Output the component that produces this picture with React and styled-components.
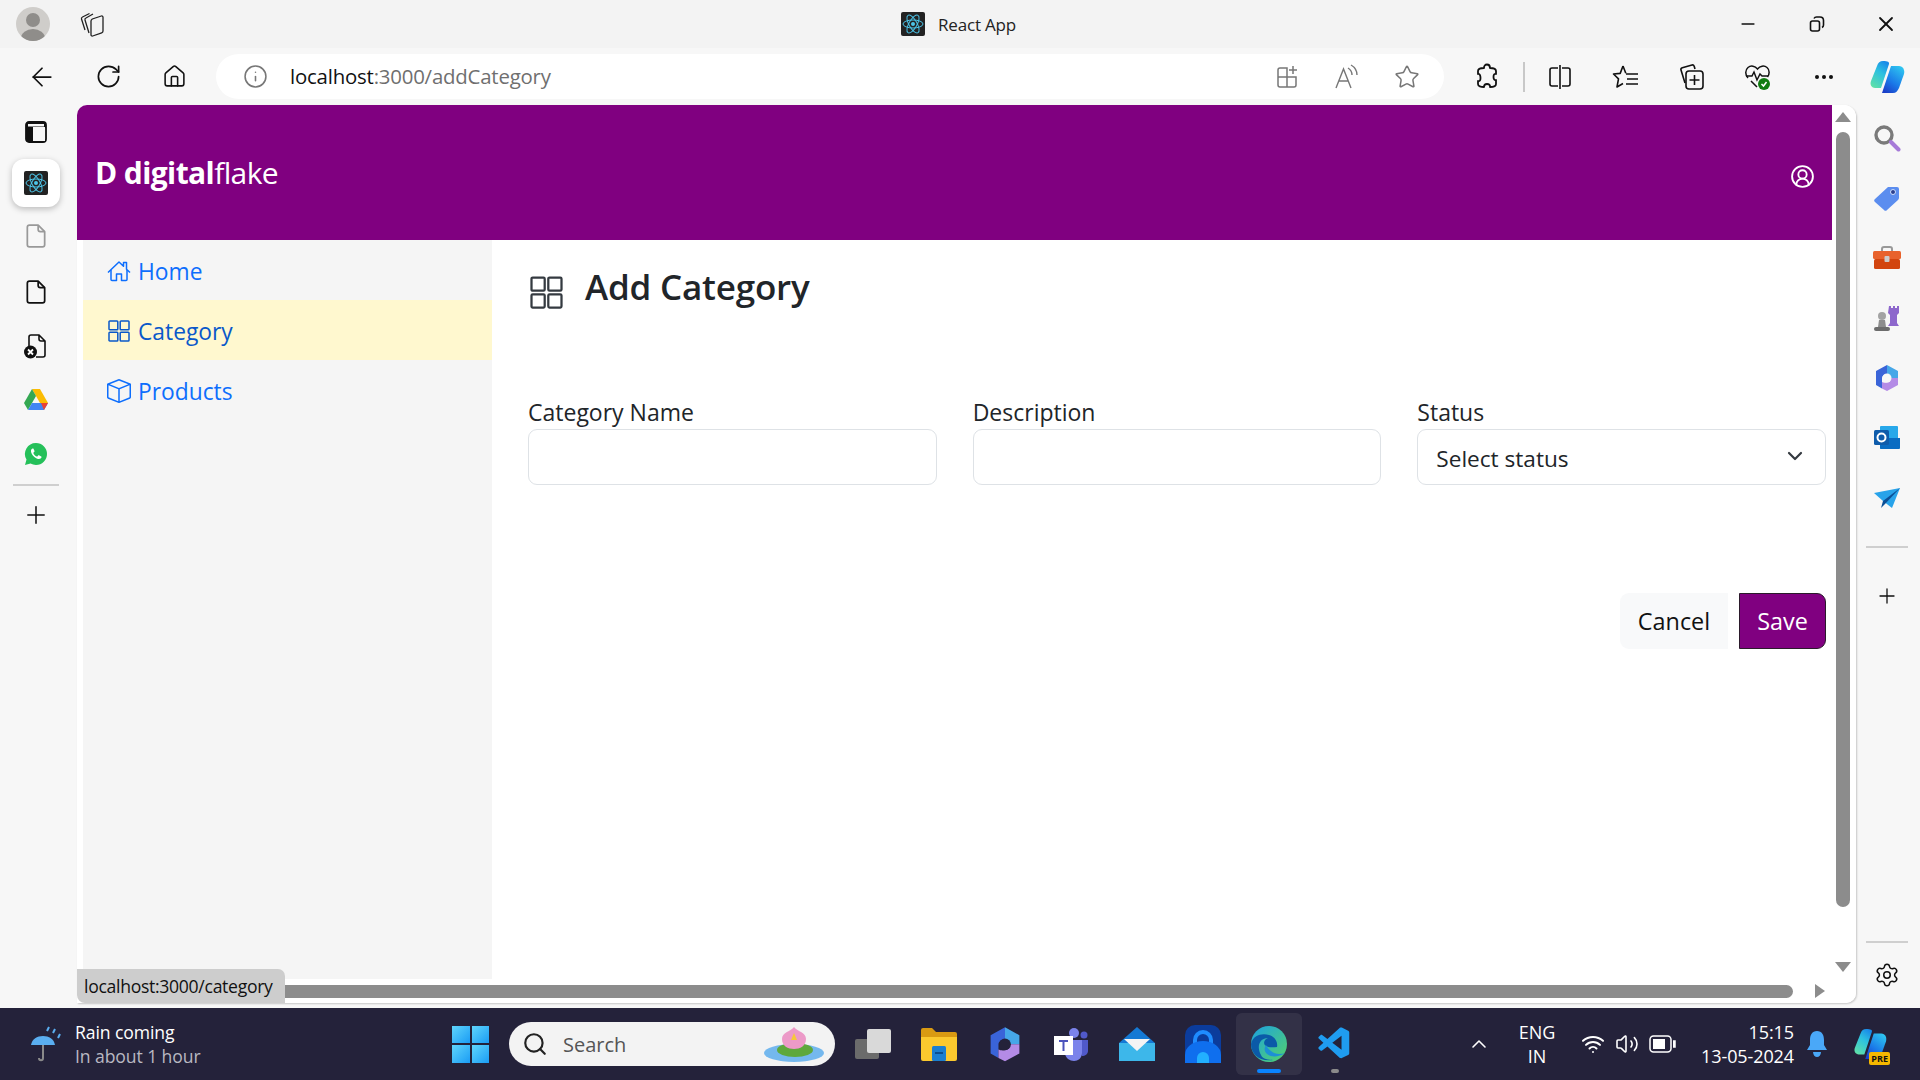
import React from 'react'
import styled, { createGlobalStyle } from 'styled-components'
import {
  ArrowLeft, RotateCw, Home as HomeLine, Info, Star, Plus, Settings, ChevronDown,
  CircleUserRound, Minus, X, Search, ChevronUp, Wifi, Volume2
} from 'lucide-react'
import { BsBox } from 'react-icons/bs'
import { VscVscode } from 'react-icons/vsc'

const PURPLE = '#800080'
const FONT = '"Open Sans", "Noto Sans", "Liberation Sans", sans-serif'

const GlobalStyle = createGlobalStyle`
  html, body { margin: 0; padding: 0; background: #f7f7f7; }
  * { box-sizing: border-box; }
  body { font-family: ${FONT}; color: #212529; overflow: hidden; }
`

const Screen = styled.div`
  width: 1920px;
  height: 1080px;
  display: flex;
  flex-direction: column;
  overflow: hidden;
`

// window chrome
const TitleBar = styled.div`
  height: 48px;
  background: #f3f3f3;
  display: flex;
  align-items: center;
  padding-left: 16px;
  flex: none;
`
const Avatar = styled.div`
  width: 34px;
  height: 34px;
  border-radius: 50%;
  background: #cfcdca;
  overflow: hidden;
  display: flex;
  align-items: flex-end;
  flex: none;
`
const TabsIcon = styled.div`
  margin-left: 30px;
  display: flex;
  align-items: center;
`
const WindowTitle = styled.div`
  flex: 1;
  display: flex;
  justify-content: center;
  align-items: center;
  gap: 13px;
  font-size: 17px;
  letter-spacing: -0.2px;
  color: #222;
  padding-left: 98px;
`
const WindowButtons = styled.div`
  display: flex;
  align-items: center;
`
const WindowButton = styled.div`
  width: 69px;
  display: flex;
  justify-content: center;
`
const ToolBar = styled.div`
  height: 57px;
  flex: none;
  background: #f7f7f7;
  display: flex;
  align-items: center;
  padding-left: 9px;
`
const ToolButton = styled.div`
  width: ${p => p.$w || 66}px;
  height: 45px;
  flex: none;
  display: flex;
  align-items: center;
  justify-content: center;
  color: ${p => p.$muted ? '#777' : '#111'};
`
const UrlBar = styled.div`
  width: 1228px;
  height: 45px;
  margin-left: 9px;
  margin-right: 10px;
  background: #fff;
  border-radius: 23px;
  display: flex;
  align-items: center;
  flex: none;
  padding-left: 27px;
  padding-right: 7px;
`
const UrlText = styled.div`
  flex: 1;
  font-size: 20.4px;
  color: #111;
  letter-spacing: -0.2px;
  margin-left: 22px;
  margin-top: -2px;
`
const UrlDim = styled.span`
  color: #6f6f6f;
`
const Separator = styled.div`
  width: 2px;
  height: 30px;
  background: #c8c8c8;
  flex: none;
  margin: 0 2px 0 3px;
`

const Middle = styled.div`
  flex: 1;
  display: flex;
  min-height: 0;
`
const LeftRail = styled.div`
  width: 77px;
  flex: none;
  background: #f7f7f7;
  display: flex;
  flex-direction: column;
  align-items: center;
  padding-right: 6px;
`
const RailSlot = styled.div`
  height: ${p => p.$h || 54}px;
  flex: none;
  width: 100%;
  display: flex;
  align-items: center;
  justify-content: center;
`
const ActiveTile = styled.div`
  width: 48px;
  height: 48px;
  background: #fff;
  border-radius: 12px;
  box-shadow: 0 2px 6px rgba(0, 0, 0, 0.25);
  display: flex;
  align-items: center;
  justify-content: center;
`
const RailDivider = styled.div`
  width: ${p => p.$w || 46}px;
  height: 2px;
  background: #cfcfcf;
  flex: none;
  margin: ${p => p.$m || '3px 0 0'};
`

// browser viewport
const Viewport = styled.div`
  position: relative;
  width: 1779px;
  flex: none;
  height: 898px;
  background: #fff;
  border-top-left-radius: 10px;
  border-top-right-radius: 12px;
  border-bottom-right-radius: 10px;
  box-shadow: 1px 1px 2px rgba(0, 0, 0, 0.2);
  overflow: hidden;
  display: grid;
  grid-template-columns: 1755px 24px;
  grid-template-rows: 874px 24px;
`
const Page = styled.div`
  display: flex;
  flex-direction: column;
  overflow: hidden;
`
const Header = styled.header`
  height: 135px;
  flex: none;
  background: ${PURPLE};
  color: #fff;
  display: flex;
  align-items: center;
  justify-content: space-between;
  padding: 0 17px 0 18px;
`
const Logo = styled.div`
  font-size: 30px;
  font-weight: 700;
  letter-spacing: -0.6px;
`
const LogoLight = styled.span`
  font-weight: 400;
`
const UserButton = styled.div`
  display: flex;
  margin-top: 7px;
`
const Body = styled.div`
  flex: 1;
  display: flex;
  padding-left: 6px;
  min-height: 0;
`
const Sidebar = styled.nav`
  width: 409px;
  flex: none;
  background: #f5f5f5;
`
const NavItem = styled.a`
  height: 60px;
  display: flex;
  align-items: center;
  padding: 2px 0 0 24px;
  gap: 7px;
  font-size: 22.8px;
  color: ${p => p.$active ? '#0a58ca' : '#0d6efd'};
  background: ${p => p.$active ? '#fff8cf' : 'transparent'};
`
const NavIcon = styled.span`
  width: 24px;
  height: 24px;
  display: flex;
  align-items: center;
  justify-content: center;
  flex: none;
`
const Content = styled.main`
  flex: 1;
  padding: 32px 6px 0 36px;
`
const TitleRow = styled.div`
  display: flex;
  align-items: center;
  gap: 22px;
  height: 40px;
  padding-left: 2px;
  color: #343a40;
`
const Title = styled.h1`
  margin: 0 0 12px;
  font-size: 35px;
  font-weight: 600;
  letter-spacing: -0.2px;
  color: #212529;
`
const FieldGrid = styled.div`
  display: grid;
  grid-template-columns: repeat(3, 1fr);
  gap: 36px;
  margin-top: 81px;
`
const Field = styled.div`
  display: flex;
  flex-direction: column;
`
const Label = styled.label`
  font-size: 23px;
  line-height: 38px;
  height: 36px;
`
const TextInput = styled.input`
  height: 56px;
  border: 1.5px solid #dee2e6;
  border-radius: 9px;
  background: #fff;
  outline: none;
`
const SelectBox = styled.div`
  height: 56px;
  border: 1.5px solid #dee2e6;
  border-radius: 9px;
  display: flex;
  align-items: center;
  justify-content: space-between;
  padding: 2px 18px 0 18px;
  font-size: 22.6px;
  color: #212529;
`
const SelectChevron = styled.span`
  display: flex;
  margin-top: -4px;
  color: #343a40;
`
const Actions = styled.div`
  display: flex;
  justify-content: flex-end;
  gap: 11px;
  margin-top: 108px;
`
const ActionButton = styled.button`
  height: 56px;
  width: ${p => p.$primary ? 87 : 108}px;
  font-family: ${FONT};
  font-size: 23.4px;
  padding: 0;
  border: ${p => p.$primary ? '1.5px solid #2b1a2b' : 'none'};
  border-radius: ${p => p.$primary ? '0 9px 9px 0' : '9px 0 0 9px'};
  background: ${p => p.$primary ? PURPLE : '#f8f9fa'};
  color: ${p => p.$primary ? '#fff' : '#111'};
`

// scrollbars
const VTrack = styled.div`
  display: flex;
  flex-direction: column;
  align-items: center;
  background: #fff;
  padding: 7px 3px 0 0;
`
const ArrowUp = styled.div`
  width: 0;
  height: 0;
  border-left: 8px solid transparent;
  border-right: 8px solid transparent;
  border-bottom: 10px solid #8c8c8c;
  flex: none;
`
const ArrowDown = styled(ArrowUp)`
  border-bottom: none;
  border-top: 10px solid #8c8c8c;
  margin-top: 55px;
`
const VThumb = styled.div`
  width: 14px;
  height: 775px;
  margin-top: 10px;
  background: #8c8c8c;
  border-radius: 7px;
  flex: none;
`
const HTrack = styled.div`
  background: #fff;
  display: flex;
  align-items: center;
  padding-left: 200px;
  padding-bottom: 0;
`
const HThumb = styled.div`
  width: 1516px;
  height: 13px;
  background: #8c8c8c;
  border-radius: 0 7px 7px 0;
  flex: none;
`
const ArrowRight = styled.div`
  width: 0;
  height: 0;
  margin-left: 22px;
  border-top: 7px solid transparent;
  border-bottom: 7px solid transparent;
  border-left: 10px solid #8c8c8c;
  flex: none;
`
const Corner = styled.div`
  background: #fff;
`
const StatusBubble = styled.div`
  position: absolute;
  left: 0;
  bottom: 0;
  width: 208px;
  height: 34px;
  background: #cdcdcd;
  border-radius: 0 7px 0 8px;
  font-size: 17.6px;
  letter-spacing: -0.3px;
  color: #111;
  display: flex;
  align-items: center;
  padding-left: 7px;
`
const RightRail = styled.div`
  flex: 1;
  background: #f7f7f7;
  display: flex;
  flex-direction: column;
  align-items: center;
  padding-top: 3px;
  padding-right: 2px;
`
const RightSlot = styled.div`
  height: 60px;
  flex: none;
  display: flex;
  align-items: center;
  justify-content: center;
`
const RailSpacer = styled.div`
  flex: 1;
`
const RailGear = styled.div`
  border-top: 2px solid #cfcfcf;
  width: 42px;
  height: 52px;
  flex: none;
  margin-bottom: 11px;
  display: flex;
  align-items: flex-end;
  justify-content: center;
  padding-bottom: 5px;
`

// taskbar
const Taskbar = styled.footer`
  height: 72px;
  flex: none;
  margin-top: 4px;
  background: #24223a;
  color: #fff;
  display: flex;
  align-items: center;
  position: relative;
`
const Weather = styled.div`
  display: flex;
  align-items: center;
  gap: 11px;
  width: 452px;
  padding-left: 28px;
  flex: none;
`
const WeatherText = styled.div`
  display: flex;
  flex-direction: column;
  font-size: 17.6px;
  line-height: 24px;
  letter-spacing: -0.1px;
`
const WeatherSub = styled.span`
  color: #b9b8c2;
`
const StartButton = styled.div`
  width: 37px;
  height: 37px;
  display: grid;
  grid-template-columns: 1fr 1fr;
  gap: 2px;
  flex: none;
`
const StartPane = styled.div`
  background: linear-gradient(135deg, #5fd5fb, #1a9cf5);
`
const SearchBox = styled.div`
  width: 326px;
  height: 44px;
  margin-left: 20px;
  background: #f3f3f3;
  border-radius: 22px;
  display: flex;
  align-items: center;
  padding: 0 8px 0 13px;
  gap: 15px;
  color: #555;
  font-size: 20px;
  flex: none;
`
const SearchWord = styled.span`
  flex: 1;
`
const AppRow = styled.div`
  display: flex;
  margin-left: 5px;
  flex: none;
`
const AppSlot = styled.div`
  width: 66px;
  height: 62px;
  position: relative;
  display: flex;
  align-items: center;
  justify-content: center;
  flex: none;
  background: ${p => p.$active ? 'rgba(255,255,255,0.07)' : 'transparent'};
  border-radius: 6px;
`
const RunDot = styled.div`
  position: absolute;
  bottom: 2px;
  left: 50%;
  transform: translateX(-50%);
  width: ${p => p.$wide ? 24 : 8}px;
  height: 4px;
  border-radius: 2px;
  background: ${p => p.$wide ? '#0a84ff' : '#8a8a8a'};
`
const Tray = styled.div`
  flex: 1;
  display: flex;
  align-items: center;
  padding-left: 99px;
  color: #fff;
`
const Lang = styled.div`
  width: 58px;
  margin-left: 17px;
  text-align: center;
  font-size: 18px;
  line-height: 24px;
`
const TrayIcons = styled.div`
  display: flex;
  align-items: center;
  gap: 10px;
  margin-left: 15px;
`
const Clock = styled.div`
  width: 112px;
  margin-left: 6px;
  text-align: right;
  font-size: 18px;
  line-height: 24px;
  letter-spacing: -0.1px;
  white-space: nowrap;
`
const Bell = styled.div`
  margin-left: 12px;
  display: flex;
`
const PreWrap = styled.div`
  position: relative;
  margin-left: 25px;
  display: flex;
`
const PreBadge = styled.div`
  position: absolute;
  right: -3px;
  bottom: -4px;
  background: #f5b800;
  color: #111;
  font-size: 9px;
  font-weight: 700;
  padding: 0 2px;
  border-radius: 2px;
`

// drawn icons
const GridIcon = ({ size = 22, weight = 1.5 }) => (
  <svg width={size} height={size} viewBox="0 0 22 22" fill="none" stroke="currentColor" strokeWidth={weight}>
    <rect x="1" y="1" width="8.800" height="8.800" rx="0.800" />
    <rect x="12.200" y="1" width="8.800" height="8.800" rx="0.800" />
    <rect x="1" y="12.200" width="8.800" height="8.800" rx="0.800" />
    <rect x="12.200" y="12.200" width="8.800" height="8.800" rx="0.800" />
  </svg>
)
const HouseIcon = () => (
  <svg width="24" height="24" viewBox="0 0 24 24" fill="none" stroke="currentColor" strokeWidth="1.500" strokeLinejoin="round">
    <path d="M1 13.500 12 3l4.500 4.300V3.500h3v6.700l3.500 3.300" />
    <path d="M4 11v9.500a1 1 0 0 0 1 1h4.500V15h5v6.500H19a1 1 0 0 0 1-1V11" />
  </svg>
)
const ReactMark = ({ size = 24, bg = '#222' }) => (
  <svg width={size} height={size} viewBox="0 0 24 24">
    <rect width="24" height="24" rx="2" fill={bg} />
    <g fill="none" stroke="#4cc4e8" strokeWidth="1">
      <ellipse cx="12" cy="12" rx="10" ry="4" />
      <ellipse cx="12" cy="12" rx="10" ry="4" transform="rotate(60 12 12)" />
      <ellipse cx="12" cy="12" rx="10" ry="4" transform="rotate(120 12 12)" />
    </g>
    <circle cx="12" cy="12" r="2" fill="#4cc4e8" />
  </svg>
)
const PersonFill = () => (
  <svg width="34" height="34" viewBox="0 0 34 34">
    <circle cx="17" cy="13" r="7" fill="#8f8d8a" />
    <ellipse cx="17" cy="31" rx="12" ry="9" fill="#8f8d8a" />
  </svg>
)
const TabStack = () => (
  <svg width="26" height="28" viewBox="0 0 26 28" fill="none" stroke="#222" strokeWidth="1.300">
    <path d="M5 20 1.500 9c-.3-1 .2-1.600 1-2l7-3.500" />
    <path d="M9 23 5 10c-.3-1 .2-1.700 1-2l7-4" />
    <path d="M11 11c0-1 .5-1.500 1.300-2l9-3c1-.3 1.700.3 1.700 1.300V21c0 1-.5 1.500-1.300 1.800l-9 3.200c-1 .3-1.700-.3-1.700-1.300z" />
  </svg>
)
const RestoreIcon = () => (
  <svg width="16" height="16" viewBox="0 0 16 16" fill="none" stroke="#111" strokeWidth="1.600">
    <rect x="1.500" y="5" width="9" height="10" rx="2" />
    <path d="M5 2.500C5.500 1.500 6 1 7.500 1H11c2 0 3.500 1.500 3.500 3.500V9c0 1-.5 2-1.500 2.500" />
  </svg>
)
const SidebarToggle = () => (
  <svg width="22" height="22" viewBox="0 0 22 22">
    <rect x="1" y="1" width="20" height="20" rx="3" fill="none" stroke="#111" strokeWidth="1.800" />
    <path d="M1 4a3 3 0 0 1 3-3h14a3 3 0 0 1 3 3v3H8v14H4a3 3 0 0 1-3-3z" fill="#111" />
    <rect x="8" y="6" width="12" height="14" fill="#f7f7f7" />
    <rect x="3" y="3" width="16" height="2.500" fill="#f7f7f7" />
  </svg>
)
const DocIcon = ({ color = '#111', size = 24 }) => (
  <svg width={size} height={size} viewBox="0 0 24 24" fill="none" stroke={color} strokeWidth="1.600" strokeLinejoin="round">
    <path d="M6 2h8l6 6v12a2 2 0 0 1-2 2H6a2 2 0 0 1-2-2V4a2 2 0 0 1 2-2z" />
    <path d="M14 2v4a2 2 0 0 0 2 2h4" />
  </svg>
)
const DocX = () => (
  <svg width="26" height="26" viewBox="0 0 26 26">
    <path d="M8 2h8l6 6v14a2 2 0 0 1-2 2h-7M6 16V4a2 2 0 0 1 2-2M16 2v4a2 2 0 0 0 2 2h4" fill="none" stroke="#111" strokeWidth="1.600" />
    <circle cx="7.500" cy="19" r="6.500" fill="#111" />
    <path d="m5 16.500 5 5m0-5-5 5" stroke="#fff" strokeWidth="1.800" />
  </svg>
)
const DriveIcon = () => (
  <svg width="24" height="22" viewBox="0 0 24 22">
    <path d="M8 0h8l8 14h-8z" fill="#fbbc04" />
    <path d="M8 0 0 14l4 7 8-14z" fill="#34a853" />
    <path d="M4 21h16l4-7H8z" fill="#4285f4" />
    <path d="M20 21l4-7h-7z" fill="#ea4335" />
  </svg>
)
const ChatIcon = () => (
  <svg width="24" height="24" viewBox="0 0 24 24">
    <path d="M12 1a11 11 0 0 1 0 22c-2 0-3.800-.5-5.400-1.400L1 23l1.500-5.400A11 11 0 0 1 12 1z" fill="#25c05a" />
    <path d="M8.500 6.500c-1 .4-1.700 1.500-1.500 3 .5 3.400 4 7 7.500 7.500 1.500.2 2.700-.6 3-1.700.1-.4 0-.7-.3-.9l-2.200-1.100c-.4-.2-.7-.1-.9.200l-.7.900c-.2.200-.4.300-.7.100-1.500-.6-2.700-1.800-3.300-3.300-.1-.3 0-.5.200-.7l.7-.7c.2-.2.300-.5.200-.8l-1-2.200c-.1-.4-.5-.5-.8-.3z" fill="#fff" />
  </svg>
)
const UrlGridPlus = () => (
  <svg width="24" height="24" viewBox="0 0 24 24" fill="none" stroke="#777" strokeWidth="1.500">
    <path d="M3 12h18M12 12v10M3 5a2 2 0 0 1 2-2h7v19H5a2 2 0 0 1-2-2zM12 12h9v8a2 2 0 0 1-2 2h-7" />
    <path d="M18 1v8M14 5h8" />
  </svg>
)
const ReadAloud = () => (
  <svg width="26" height="26" viewBox="0 0 26 26" fill="none" stroke="#777" strokeWidth="1.400">
    <path d="M2 24 9.500 5 17 24M5 17h9" />
    <path d="M14 4c2.500 1.500 4 4 4 7M17 1c3.500 2 6 6 6 10" />
  </svg>
)
const PuzzleIcon = () => (
  <svg width="24" height="28" viewBox="0 0 24 28" fill="none" stroke="#111" strokeWidth="1.800" strokeLinejoin="round">
    <path d="M9 5c0-2 1-3.500 3-3.500S15 3 15 5c2.500 0 6 .5 6 3v3c-1.800-.5-2.500 1-2.500 3s1 3.500 2.500 3v4c0 2.500-3 3-6 3 .3-2-1-3-3-3s-3 1-3 3c-3 0-6-.5-6-3v-3c1.800.5 2.500-1 2.500-3S5 10.500 3 11V8c0-2.500 3-3 6-3z" />
  </svg>
)
const SplitIcon = () => (
  <svg width="24" height="26" viewBox="0 0 24 26" fill="none" stroke="#111" strokeWidth="1.600">
    <path d="M10 4H4a2 2 0 0 0-2 2v14a2 2 0 0 0 2 2h6M14 4h6a2 2 0 0 1 2 2v14a2 2 0 0 1-2 2h-6M12 1v24" />
  </svg>
)
const FavList = () => (
  <svg width="28" height="26" viewBox="0 0 28 26" fill="none" stroke="#111" strokeWidth="1.600" strokeLinejoin="round">
    <path d="M11 2 8.200 9.400 1.500 10l5 4.800L5 23l6-3.500M11 2l2.800 7.200" />
    <path d="M14 10h12M15 15h11M14 20h12" />
  </svg>
)
const CollectionsIcon = () => (
  <svg width="26" height="28" viewBox="0 0 26 28" fill="none" stroke="#111" strokeWidth="1.600">
    <path d="M6 20 2 7c-.3-1 .3-2 1.300-2.300L13 2c1-.3 1.800.3 2.200 1.300L16 6" />
    <rect x="7" y="8" width="17" height="18" rx="3" />
    <path d="M15.500 12v10M10.500 17h10" />
  </svg>
)
const HeartCheck = () => (
  <svg width="28" height="28" viewBox="0 0 28 28">
    <path d="M4 15C1 12 1 7 4 4.500s7-1.500 9.500 1.500C16 3 20 2 23 4.500s2.500 7 .5 9.500M13 24l-6-6" fill="none" stroke="#111" strokeWidth="1.500" />
    <path d="M2 13h6l2-4 3 8 3-6 2 2h6" fill="none" stroke="#111" strokeWidth="1.500" />
    <circle cx="20" cy="21" r="6" fill="#107c10" />
    <path d="m17.500 21 2 2 3-4" stroke="#fff" strokeWidth="1.500" fill="none" />
  </svg>
)
const Dots = () => (
  <svg width="20" height="6" viewBox="0 0 20 6" fill="#111">
    <circle cx="3" cy="3" r="2" />
    <circle cx="10" cy="3" r="2" />
    <circle cx="17" cy="3" r="2" />
  </svg>
)
const CopilotIcon = ({ size = 36, id = 'cp' }) => (
  <svg width={size} height={size} viewBox="0 0 36 36">
    <defs>
      <linearGradient id={id + 'a'} x1="0.200" y1="1" x2="0.700" y2="0">
        <stop offset="0" stopColor="#5fe0a8" />
        <stop offset="0.600" stopColor="#2cc0e0" />
        <stop offset="1" stopColor="#1a8be8" />
      </linearGradient>
      <linearGradient id={id + 'b'} x1="0.800" y1="0" x2="0.200" y2="1">
        <stop offset="0" stopColor="#2ec5f0" />
        <stop offset="0.600" stopColor="#1a78e8" />
        <stop offset="1" stopColor="#1b3fc8" />
      </linearGradient>
    </defs>
    <path d="M14 2c-3 0-5 1.500-6 5L2 22c-1.500 4 1 7 4 7h6l8-24c.5-2-1-3-6-3z" fill={`url(#${id}a)`} />
    <path d="M24 34c3 0 4.500-2 6-5l5-14c1-4-1-8-5-8h-8l-9 27z" fill={`url(#${id}b)`} />
  </svg>
)
const LensIcon = () => (
  <svg width="28" height="28" viewBox="0 0 28 28">
    <circle cx="11" cy="11" r="8" fill="none" stroke="#7a7a7a" strokeWidth="3.400" />
    <path d="m18 18 7.500 7.500" stroke="#a67ad8" strokeWidth="4" strokeLinecap="round" />
  </svg>
)
const ToolIcon = () => (
  <svg width="28" height="24" viewBox="0 0 28 24">
    <path d="M9 6V3a2 2 0 0 1 2-2h6a2 2 0 0 1 2 2v3" fill="none" stroke="#999" strokeWidth="2" />
    <rect y="5" width="28" height="8" rx="1.500" fill="#e8622c" />
    <rect x="1" y="13" width="26" height="10" rx="1.500" fill="#d2450f" />
    <rect x="11.500" y="10" width="5" height="6" rx="1" fill="#ccc" />
  </svg>
)
const TagIcon = () => (
  <svg width="26" height="26" viewBox="0 0 26 26">
    <path d="M14 2h9a2 2 0 0 1 2 2v9a3 3 0 0 1-1 2L13 25a2 2 0 0 1-3 0L1 17a2 2 0 0 1 0-3z" fill="#5b8def" />
    <circle cx="19" cy="7" r="2.500" fill="#2b3f8f" stroke="#cfe0ff" />
  </svg>
)
const ChessIcon = () => (
  <svg width="28" height="28" viewBox="0 0 28 28">
    <path d="M16 2h2v2h2V2h2v2h2V2h2v7l-2 2v8l2 3H15l2-3v-8l-2-2z" fill="#8d67cc" />
    <circle cx="9" cy="12" r="4" fill="#a3a3a3" />
    <path d="M6 16h6l1 7H5z" fill="#8d8d8d" />
    <rect x="1" y="23" width="16" height="4" rx="2" fill="#6c6c6c" />
  </svg>
)
const HexIcon = ({ size = 26, hole = '#f7f7f7' }) => (
  <svg width={size} height={size * 1.080} viewBox="0 0 26 28">
    <path d="M13 1 24 7v7H17c0-2-2-4-4-4z" fill="#46a7e8" />
    <path d="M13 1 2 7v14l6 3.500V14c0-2 2-4 5-4z" fill="#3a64d8" />
    <path d="M24 14v7l-11 6-5-2.500V18c1 .5 3 1 5 .5 2 0 4-2 4-4.500z" fill="#b48be6" />
    <circle cx="13" cy="14" r="4.500" fill={hole} />
  </svg>
)
const OutlookIcon = () => (
  <svg width="26" height="24" viewBox="0 0 26 24">
    <rect x="6" y="0" width="18" height="23" rx="1" fill="#28a8ea" />
    <path d="M6 12h20v10a1 1 0 0 1-1 1H7a1 1 0 0 1-1-1z" fill="#0a6cc2" />
    <rect y="4" width="15" height="15" rx="1.500" fill="#0f5cab" />
    <circle cx="7.500" cy="11.500" r="4" fill="none" stroke="#fff" strokeWidth="2" />
  </svg>
)
const PlaneIcon = () => (
  <svg width="26" height="20" viewBox="0 0 26 20">
    <path d="M0 5 26 0 18 20 9 13z" fill="#28a3ea" />
    <path d="M26 0 9 13l-2 7 4-4z" fill="#0c4f96" />
  </svg>
)
const UmbrellaIcon = () => (
  <svg width="36" height="38" viewBox="0 0 36 38">
    <path d="M3 20c1-6 6-9 12-9s11 3 12 9z" fill="#5aaef0" />
    <path d="M15 20v13c0 3-4 3-4 0" fill="none" stroke="#8a8a8a" strokeWidth="2" />
    <path d="M19 6l2-4M25 8l2-4M30 13l2-4" stroke="#5aaef0" strokeWidth="2" />
  </svg>
)
const LotusIcon = () => (
  <svg width="66" height="38" viewBox="0 0 66 38">
    <ellipse cx="33" cy="28" rx="30" ry="9" fill="#74b8ee" />
    <ellipse cx="34" cy="25" rx="18" ry="7" fill="#5ea83c" />
    <path d="M33 2c4 5 12 5 12 12s-6 10-12 10-12-3-12-10S29 7 33 2z" fill="#ec9ac8" />
    <path d="M33 8l3 7h-6z" fill="#f6c83a" />
  </svg>
)
const TaskView = () => (
  <svg width="38" height="34" viewBox="0 0 38 34">
    <rect x="1" y="12" width="24" height="20" rx="2" fill="#6b6b6b" />
    <rect x="13" y="2" width="24" height="24" rx="2" fill="#d9d9d9" />
  </svg>
)
const FolderIcon = () => (
  <svg width="36" height="34" viewBox="0 0 36 34">
    <path d="M0 3a2 2 0 0 1 2-2h9l4 4h19a2 2 0 0 1 2 2v6H0z" fill="#d99a12" />
    <path d="M0 10h36v22a2 2 0 0 1-2 2H2a2 2 0 0 1-2-2z" fill="#fbc92e" />
    <rect x="11" y="19" width="14" height="15" rx="1.500" fill="#1a7fd0" />
    <rect x="14" y="25" width="8" height="2" fill="#0b4f90" />
  </svg>
)
const TeamsIcon = () => (
  <svg width="36" height="34" viewBox="0 0 36 34">
    <circle cx="21" cy="6" r="5" fill="#7b83eb" />
    <circle cx="31" cy="8" r="3.500" fill="#5059c9" />
    <path d="M26 13h9v11c0 3-3 5-6 5z" fill="#5059c9" />
    <path d="M12 13h17v13c0 5-4 8-8 8s-9-3-9-8z" fill="#7b83eb" />
    <rect x="1" y="9" width="19" height="19" fill="#fff" />
    <path d="M6 13h9v2h-3.500v9h-2v-9H6z" fill="#4b53bc" />
  </svg>
)
const MailIcon = () => (
  <svg width="36" height="34" viewBox="0 0 36 34">
    <path d="M18 0 36 16v18H0V16z" fill="#1479d4" />
    <path d="M0 16h36v18H0z" fill="#3db7ea" />
    <path d="M5 12h26L18 24z" fill="#f4f4f4" />
  </svg>
)
const BlueAppIcon = () => (
  <svg width="36" height="38" viewBox="0 0 36 38">
    <rect width="36" height="38" rx="10" fill="#0b3c9c" />
    <path d="M10 22v-7a8 8 0 0 1 16 0v7" fill="none" stroke="#1e8cff" strokeWidth="4" />
    <path d="M0 38V30a18 14 0 0 1 36 0v8z" fill="#0f6fee" />
    <path d="M12 38v-5a6 6 0 0 1 12 0v5z" fill="#22b0ff" />
  </svg>
)
const EdgeIcon = () => (
  <svg width="38" height="38" viewBox="0 0 38 38">
    <defs>
      <linearGradient id="edgeg" x1="0" y1="0" x2="1" y2="1">
        <stop offset="0" stopColor="#1ba0e2" />
        <stop offset="1" stopColor="#54d36a" />
      </linearGradient>
    </defs>
    <circle cx="19" cy="19" r="18" fill="url(#edgeg)" />
    <path d="M1 19C3 10 12 8 19 10c6 2 9 7 8 12-3 0-8 1-11-1-4-3-1-7 2-8-8 0-12 8-7 17 1 3 5 5 12 5C9 37 1 29 1 19z" fill="#0b5aa8" />
    <path d="M16 20c-3 4-1 9 5 11 4 1 10 0 14-3-5 2-11 1-14-2-3-2-4-4-5-6z" fill="#1d8fd6" />
  </svg>
)
const BatteryIcon = () => (
  <svg width="27" height="20" viewBox="0 0 27 20" fill="none" stroke="#fff" strokeWidth="1.500">
    <rect x="1" y="2" width="21" height="16" rx="3.500" />
    <rect x="4" y="5" width="12" height="10" fill="#fff" stroke="none" />
    <path d="M24 7h2v6h-2" fill="#fff" />
  </svg>
)
const BellFill = () => (
  <svg width="22" height="26" viewBox="0 0 22 26" fill="#4aa8f8">
    <path d="M11 0c5 0 7 4 7 9v5l3 5H1l3-5V9c0-5 2-9 7-9z" />
    <path d="M7 21h8c0 3-2 5-4 5s-4-2-4-5z" />
  </svg>
)

const apps = [
  { key: 'tasks', node: <TaskView /> },
  { key: 'files', node: <FolderIcon /> },
  { key: 'm365', node: <HexIcon size={34} hole="#24223a" /> },
  { key: 'teams', node: <TeamsIcon /> },
  { key: 'mail', node: <MailIcon /> },
  { key: 'blue', node: <BlueAppIcon /> },
  { key: 'edge', node: <EdgeIcon />, active: true },
  { key: 'code', node: <VscVscode size={38} color="#1f9cf0" />, dot: true }
]

function App () {
  return (
    <Screen>
      <GlobalStyle />
      <TitleBar>
        <Avatar><PersonFill /></Avatar>
        <TabsIcon><TabStack /></TabsIcon>
        <WindowTitle>
          <ReactMark />
          <span>React App</span>
        </WindowTitle>
        <WindowButtons>
          <WindowButton><Minus size={20} color="#111" strokeWidth={2} /></WindowButton>
          <WindowButton><RestoreIcon /></WindowButton>
          <WindowButton><X size={24} color="#111" strokeWidth={1.800} /></WindowButton>
        </WindowButtons>
      </TitleBar>

      <ToolBar>
        <ToolButton><ArrowLeft size={30} strokeWidth={1.400} /></ToolButton>
        <ToolButton><RotateCw size={27} strokeWidth={1.500} /></ToolButton>
        <ToolButton><HomeLine size={25} strokeWidth={1.500} /></ToolButton>
        <UrlBar>
          <Info size={25} color="#777" strokeWidth={1.500} />
          <UrlText>localhost<UrlDim>:3000/addCategory</UrlDim></UrlText>
          <ToolButton $muted $w={60}><UrlGridPlus /></ToolButton>
          <ToolButton $muted $w={60}><ReadAloud /></ToolButton>
          <ToolButton $muted $w={60}><Star size={26} strokeWidth={1.400} /></ToolButton>
        </UrlBar>
        <ToolButton $w={66}><PuzzleIcon /></ToolButton>
        <Separator />
        <ToolButton $w={66}><SplitIcon /></ToolButton>
        <ToolButton $w={66}><FavList /></ToolButton>
        <ToolButton $w={66}><CollectionsIcon /></ToolButton>
        <ToolButton $w={66}><HeartCheck /></ToolButton>
        <ToolButton $w={66}><Dots /></ToolButton>
        <ToolButton $w={60}><CopilotIcon /></ToolButton>
      </ToolBar>

      <Middle>
        <LeftRail>
          <RailSlot><SidebarToggle /></RailSlot>
          <RailSlot $h={48}>
            <ActiveTile><ReactMark size={24} /></ActiveTile>
          </RailSlot>
          <RailSlot $h={58}><DocIcon color="#999" size={26} /></RailSlot>
          <RailSlot><DocIcon size={26} /></RailSlot>
          <RailSlot><DocX /></RailSlot>
          <RailSlot><DriveIcon /></RailSlot>
          <RailSlot><ChatIcon /></RailSlot>
          <RailDivider />
          <RailSlot $h={58}><Plus size={28} strokeWidth={1.300} color="#111" /></RailSlot>
        </LeftRail>

        <Viewport>
          <Page>
            <Header>
              <Logo>D digital<LogoLight>flake</LogoLight></Logo>
              <UserButton><CircleUserRound size={25} strokeWidth={1.800} /></UserButton>
            </Header>
            <Body>
              <Sidebar>
                <NavItem><NavIcon><HouseIcon /></NavIcon>Home</NavItem>
                <NavItem $active><NavIcon><GridIcon /></NavIcon>Category</NavItem>
                <NavItem><NavIcon><BsBox size={24} /></NavIcon>Products</NavItem>
              </Sidebar>
              <Content>
                <TitleRow>
                  <GridIcon size={33} weight={1.500} />
                  <Title>Add Category</Title>
                </TitleRow>
                <FieldGrid>
                  <Field>
                    <Label>Category Name</Label>
                    <TextInput />
                  </Field>
                  <Field>
                    <Label>Description</Label>
                    <TextInput />
                  </Field>
                  <Field>
                    <Label>Status</Label>
                    <SelectBox>
                      <span>Select status</span>
                      <SelectChevron><ChevronDown size={24} strokeWidth={2.200} /></SelectChevron>
                    </SelectBox>
                  </Field>
                </FieldGrid>
                <Actions>
                  <ActionButton>Cancel</ActionButton>
                  <ActionButton $primary>Save</ActionButton>
                </Actions>
              </Content>
            </Body>
          </Page>
          <VTrack>
            <ArrowUp />
            <VThumb />
            <ArrowDown />
          </VTrack>
          <HTrack>
            <HThumb />
            <ArrowRight />
          </HTrack>
          <Corner />
          <StatusBubble>localhost:3000/category</StatusBubble>
        </Viewport>

        <RightRail>
          <RightSlot><LensIcon /></RightSlot>
          <RightSlot><TagIcon /></RightSlot>
          <RightSlot><ToolIcon /></RightSlot>
          <RightSlot><ChessIcon /></RightSlot>
          <RightSlot><HexIcon /></RightSlot>
          <RightSlot><OutlookIcon /></RightSlot>
          <RightSlot><PlaneIcon /></RightSlot>
          <RailDivider $w={42} $m="18px 0 18px" />
          <RightSlot><Plus size={24} strokeWidth={1.300} color="#111" /></RightSlot>
          <RailSpacer />
          <RailGear><Settings size={26} strokeWidth={1.400} color="#111" /></RailGear>
        </RightRail>
      </Middle>

      <Taskbar>
        <Weather>
          <UmbrellaIcon />
          <WeatherText>
            <span>Rain coming</span>
            <WeatherSub>In about 1 hour</WeatherSub>
          </WeatherText>
        </Weather>
        <StartButton>
          <StartPane /><StartPane /><StartPane /><StartPane />
        </StartButton>
        <SearchBox>
          <Search size={26} color="#222" strokeWidth={2} />
          <SearchWord>Search</SearchWord>
          <LotusIcon />
        </SearchBox>
        <AppRow>
          {apps.map(app => (
            <AppSlot key={app.key} $active={app.active}>
              {app.node}
              {app.active && <RunDot $wide />}
              {app.dot && <RunDot />}
            </AppSlot>
          ))}
        </AppRow>
        <Tray>
          <ChevronUp size={24} strokeWidth={1.600} />
          <Lang>ENG<br />IN</Lang>
          <TrayIcons>
            <Wifi size={24} strokeWidth={2} />
            <Volume2 size={24} strokeWidth={1.600} />
            <BatteryIcon />
          </TrayIcons>
          <Clock>15:15<br />13-05-2024</Clock>
          <Bell><BellFill /></Bell>
          <PreWrap>
            <CopilotIcon size={34} id="cq" />
            <PreBadge>PRE</PreBadge>
          </PreWrap>
        </Tray>
      </Taskbar>
    </Screen>
  )
}

export default App
